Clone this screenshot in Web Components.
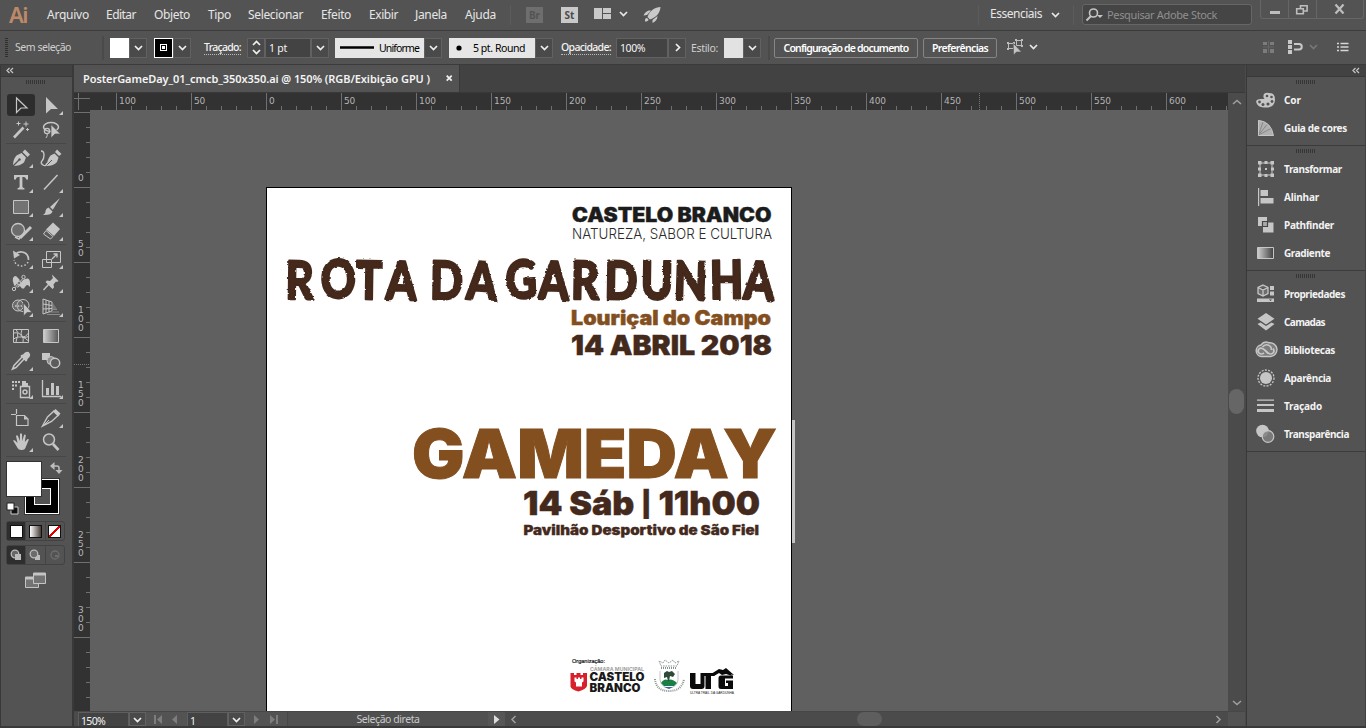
<!DOCTYPE html>
<html lang="pt">
<head>
<meta charset="utf-8">
<title>PosterGameDay_01_cmcb_350x350.ai</title>
<style>
html,body{margin:0;height:728px;overflow:hidden;background:#535353}
body{font-family:"Noto Sans","Open Sans",sans-serif}
</style>
</head>
<body>
<ai-app></ai-app>

<template id="t-app">
<style>
:host{display:grid;width:1366px;height:728px;grid-template:30px 35px 661px 2px / 1px 71px 2px 1171px 1px 1px 119px;background:#393939;color:#e4e4e4;overflow:hidden;box-sizing:border-box}
menu-bar{grid-area:1/1/2/8}
control-bar{grid-area:2/1/3/8}
tool-panel{grid-area:3/2}
doc-window{grid-area:3/4}
.gap{grid-area:3/5;background:#4a4a4a}
dock-panel{grid-area:3/7}
</style>
<menu-bar></menu-bar><control-bar></control-bar><tool-panel></tool-panel><doc-window></doc-window><div class="gap"></div><dock-panel></dock-panel>
</template>

<template id="t-menu">
<style>
:host{display:flex;align-items:center;background:#535353;height:30px;font-size:12px;line-height:16px;color:#e6e6e6}
:host>*{flex:none}
.logo{font:600 22px/28px "Noto Sans",sans-serif;color:#bd8a68;margin-left:9px;height:30px}
.v{width:1px;height:20px;background:#454545;border-right:1px solid #5c5c5c;box-sizing:border-box}
.app{width:17px;height:16px;font:bold 10px/16px "Noto Sans",sans-serif;text-align:center}
.br{background:#6e6e6e;color:#535353}
.st{background:#c9c9c9;color:#4b4b4b}
.search{box-sizing:border-box;display:flex;align-items:center;width:170px;height:21px;margin-top:-1px;border:1px solid #666;border-radius:3px;background:#454545;color:#8f8f8f}
.win{display:flex;align-self:flex-start;width:104px;height:19px;box-sizing:border-box;border:1px solid #666;border-top:0;border-radius:0 0 3px 3px}
.win svg{flex:none}
.win svg+svg{border-left:1px solid #666}
</style>
<fit-text w="18" class="logo">Ai</fit-text>
<fit-text w="42" style="margin-left:20px">Arquivo</fit-text>
<fit-text w="30" style="margin-left:17px">Editar</fit-text>
<fit-text w="36" style="margin-left:18px">Objeto</fit-text>
<fit-text w="23" style="margin-left:18px">Tipo</fit-text>
<fit-text w="55" style="margin-left:17px">Selecionar</fit-text>
<fit-text w="30" style="margin-left:18px">Efeito</fit-text>
<fit-text w="29" style="margin-left:18px">Exibir</fit-text>
<fit-text w="32" style="margin-left:17px">Janela</fit-text>
<fit-text w="31" style="margin-left:18px">Ajuda</fit-text>
<div class="v" style="margin-left:14px"></div>
<div class="app br" style="margin-left:15px">Br</div>
<div class="app st" style="margin-left:18px">St</div>
<svg style="margin-left:16px;margin-top:-2px" width="18" height="12" fill="#c9c9c9"><path d="M0 0h8v11H0zM9 0h8v5H9zM9 6h8v5H9z"/></svg>
<ui-chevron style="margin-left:5px;margin-top:-2px;width:12px"></ui-chevron>
<svg style="margin-left:13px;margin-top:-1px" width="20" height="18" fill="#c9c9c9"><path d="M18.500 1C13 1.500 8 4 5.500 11l2.500 2.500C15 11 18 6.500 18.500 1zM9 4.500C5 4 3 6.500 1.500 9.500L5 9zM15.500 10l-5 4 0 3c3-1.500 5-3.500 5-7zM5 12c-2 0-2 1.500-2 3.500 2 0 3.500-.500 3.500-2z"/></svg>
<div class="v" style="margin-left:316px"></div>
<fit-text w="52" style="margin-left:11px;margin-top:-2px">Essenciais</fit-text>
<ui-chevron style="margin-left:7px;width:12px"></ui-chevron>
<div class="v" style="margin-left:12px"></div>
<div class="search" style="margin-left:8px">
<svg width="22" height="16" fill="none" stroke="#c4c4c4" stroke-width="1.600"><circle cx="10.500" cy="6" r="4"/><path d="M8 9l-4.500 4.500" stroke-width="2"/><path d="M14 8h6l-3 3z" fill="#c4c4c4" stroke="none"/></svg>
<fit-text w="110" style="margin-left:2px;font-size:11px">Pesquisar Adobe Stock</fit-text></div>
<div class="win" style="margin-left:8px">
<svg width="27" height="18"><path d="M9 11h10v3H9z" fill="#bdbdbd"/></svg>
<svg width="27" height="18" fill="none" stroke="#bdbdbd" stroke-width="1.600"><path d="M11.500 9V5.700h6.600V11H14.500M7.700 8.700h6.600v5H7.700z"/></svg>
<svg width="46" height="18"><path d="M18.500 4.500l8 9M26.500 4.500l-8 9" stroke="#bdbdbd" stroke-width="2.200"/></svg>
</div>
</template>

<template id="t-control">
<style>
:host{display:flex;align-items:center;background:#535353;height:35px;box-sizing:border-box;border-top:1px solid #3b3b3b;border-bottom:1px solid #3b3b3b;font-size:10.500px;line-height:14px;color:#f4f4f4}
:host>*{flex:none}
.dim{color:#cfcfcf}
.lbl{border-bottom:1px dotted #bbb;line-height:13px;font-weight:500}
.sw{width:19px;height:20px;box-sizing:border-box}
.w{background:#fff}
.k{background:#000;border:1px solid #fff;display:grid;place-items:center}
.k i{width:5px;height:5px;border:1px solid #fff;display:grid;place-items:center}
.k i::after{content:"";width:3px;height:3px;background:#fff}
.k i{box-sizing:content-box}
.field{height:20px;background:#434343;border:1px solid #616161;box-sizing:border-box;display:flex;align-items:center;padding-left:3px}
.white{height:20px;background:#e6e6e6;color:#000;display:flex;align-items:center}
.btn{height:20px;box-sizing:border-box;border:1px solid #858585;border-radius:2px;display:flex;justify-content:center;align-items:center;font-weight:600;color:#fff}
.v{width:2px;height:24px;background:#4a4a4a}
ui-drop{width:18px}
</style>
<svg style="margin-left:5px" width="4" height="20"><path d="M1.500 0v20" stroke="#2f2f2f" stroke-width="3" stroke-dasharray="1 1"/></svg>
<fit-text class="dim" w="56" style="margin-left:6px;margin-top:-2px">Sem seleção</fit-text>
<div class="v" style="margin-left:31px"></div>
<div class="sw w" style="margin-left:6px"></div><ui-drop></ui-drop>
<div class="sw k" style="margin-left:7px"><i></i></div><ui-drop></ui-drop>
<fit-text class="lbl" w="37" style="margin-left:13px">Traçado:</fit-text>
<ui-drop style="margin-left:6px;width:18px" kind="step"></ui-drop>
<div class="field" style="width:46px"><fit-text w="18">1 pt</fit-text></div><ui-drop></ui-drop>
<div class="white" style="margin-left:6px;width:89px"><svg style="margin-left:5px" width="34" height="4"><path d="M0 1.500h34" stroke="#000" stroke-width="2.400"/></svg><fit-text w="40" style="margin-left:5px">Uniforme</fit-text></div><ui-drop></ui-drop>
<div class="white" style="margin-left:7px;width:86px"><svg style="margin-left:7px" width="6" height="6"><circle cx="3" cy="3" r="2.600"/></svg><fit-text w="52" style="margin-left:11px">5 pt. Round</fit-text></div><ui-drop></ui-drop>
<fit-text class="lbl" w="50" style="margin-left:8px">Opacidade:</fit-text>
<div class="field" style="margin-left:5px;width:52px"><fit-text w="25">100%</fit-text></div><ui-drop kind="right"></ui-drop>
<fit-text class="dim" w="27" style="margin-left:5px">Estilo:</fit-text>
<div class="sw" style="margin-left:6px;background:#e2e2e2"></div><ui-drop></ui-drop>
<div class="v" style="margin-left:7px"></div>
<div class="btn" style="margin-left:4px;width:144px"><fit-text w="125">Configuração de documento</fit-text></div>
<div class="btn" style="margin-left:5px;width:74px"><fit-text w="56">Preferências</fit-text></div>
<svg style="margin-left:9px;margin-top:-2px" width="18" height="18" fill="none" stroke="#bdbdbd"><path d="M2.500 5.500h5v5h-5zM10.500 2.500h5v5h-5z"/><path d="M1 4h2v2H1zM1 10h2v2H1zM7 4h2v2H7zM9 1h2v2H9zM15 1h2v2h-2zM15 7h2v2h-2z" fill="#bdbdbd" stroke="none"/><path d="M7.500 5.500v11.500l3-3h5z" fill="#c4c4c4" stroke="#535353" stroke-width=".6"/></svg>
<ui-chevron style="margin-left:4px;margin-top:-2px;width:10px"></ui-chevron>
<svg style="margin-left:225px;margin-top:-2px" width="12" height="14" fill="#7c7c7c"><path d="M0 2h4v3H0zM7 2h4v3H7zM0 9h4v4H0zM7 9h4v4H7z"/><path d="M5 1h1v12H5zM0 6.500h11v1H0z" fill="#666"/></svg>
<svg style="margin-left:13px;margin-top:-1px" width="15" height="14"><path d="M0 0h4v4H0zM0 5h4v4H0zM0 10h4v4H0z" fill="#c8c8c8"/><path d="M6 4h5a2.700 2.700 0 0 1 0 5.500H6" fill="none" stroke="#c8c8c8" stroke-width="2"/></svg>
<ui-chevron style="margin-left:5px;margin-top:-1px;width:10px;color:#777"></ui-chevron>
<svg style="margin-left:19px;margin-top:-1px" width="12" height="10"><path d="M0 1.500h2M3.500 1.500h8M0 5h2M3.500 5h8M0 8.500h2M3.500 8.500h8" stroke="#d6d6d6" stroke-width="1.400"/></svg>
</template>

<template id="t-tools">
<style>
:host{display:flex;flex-direction:column;background:#535353;height:661px}
.head{height:11px;background:#424242;border-bottom:1px solid #383838;flex:none}
.head svg{display:block;margin:2px 0 0 5px}
.g{display:grid;grid-template-columns:30px 30px;margin-left:5px;width:60px;border-bottom:1px solid #474747;box-sizing:border-box;flex:none}
ui-icon{width:30px;height:100%;align-items:center}
.sel{background:#2d2d2d;border-radius:3px;margin:2px 1px;width:28px;height:22px}
.fs{position:relative;height:58px;flex:none}
.stroke{position:absolute;left:24px;top:18px;width:34px;height:35px;box-sizing:border-box;border:1px solid #fff;outline:1px solid #333;background:#000;display:grid;place-items:center}
.stroke i{width:17px;height:17px;background:#535353;border:1px solid #fff;box-sizing:border-box}
.fill{position:absolute;left:5px;top:0;width:36px;height:36px;box-sizing:border-box;background:#fff;border:1px solid #333}
.swap{position:absolute;left:49px;top:1px}
.def{position:absolute;left:5px;top:41px}
.row{display:flex;margin-left:5px;width:59px;height:20px;box-sizing:border-box;border:1px solid #424242;border-radius:3px;flex:none}
.row>*{flex:1;display:grid;place-items:center}
.row>*+*{border-left:1px solid #454545}
.on{background:#2e2e2e}
.c{width:11px;height:11px;border:1px solid #111}
</style>
<div class="head"><svg width="8" height="7"><path d="M3.500 1L1 3.500 3.500 6M7 1L4.500 3.500 7 6" fill="none" stroke="#c4c4c4" stroke-width="1.300"/></svg></div>
<ui-grip style="margin:3px 0 0 25px"></ui-grip>
<div class="g" style="height:60px;padding-top:8px;grid-auto-rows:25px"><ui-icon class="sel" n="sel"></ui-icon><ui-icon n="direct" m></ui-icon><ui-icon n="wand"></ui-icon><ui-icon n="lasso"></ui-icon></div>
<div class="g" style="height:101px;padding-top:2px;grid-auto-rows:24.330px"><ui-icon n="pen" m></ui-icon><ui-icon n="curv"></ui-icon><ui-icon n="type" m></ui-icon><ui-icon n="line" m></ui-icon><ui-icon n="rect" m></ui-icon><ui-icon n="brush" m></ui-icon><ui-icon n="shaper" m></ui-icon><ui-icon n="eraser" m></ui-icon></div>
<div class="g" style="height:77px;padding-top:2px;grid-auto-rows:24px"><ui-icon n="rotate" m></ui-icon><ui-icon n="scale" m></ui-icon><ui-icon n="width" m></ui-icon><ui-icon n="pin" m></ui-icon><ui-icon n="shapeb" m></ui-icon><ui-icon n="persp" m></ui-icon></div>
<div class="g" style="height:53px;padding-top:2px;grid-auto-rows:24.500px"><ui-icon n="mesh"></ui-icon><ui-icon n="grad"></ui-icon><ui-icon n="eye" m></ui-icon><ui-icon n="blend"></ui-icon></div>
<div class="g" style="height:29px;padding-top:2px;grid-auto-rows:24px"><ui-icon n="spray" m></ui-icon><ui-icon n="graph" m></ui-icon></div>
<div class="g" style="height:53px;padding-top:2px;grid-auto-rows:24px"><ui-icon n="artb"></ui-icon><ui-icon n="slice" m></ui-icon><ui-icon n="hand" m></ui-icon><ui-icon n="zoom"></ui-icon></div>
<div class="fs" style="margin-top:4px"><div class="stroke"><i></i></div><div class="fill"></div>
<svg class="swap" width="13" height="13" fill="#bdbdbd"><path d="M2 4h5q2 0 2 2v4" fill="none" stroke="#bdbdbd" stroke-width="1.500"/><path d="M4.500 0v8L0 4zM5.500 8h7L9 12z"/></svg>
<svg class="def" width="13" height="13"><path d="M5 5h7v7H5z" fill="#111" stroke="#ccc"/><path d="M1 1h7v7H1z" fill="#fff" stroke="#222"/></svg></div>
<div class="row" style="margin-top:2px"><div class="on"><div class="c" style="background:#fff"></div></div><div><div class="c" style="background:linear-gradient(90deg,#fff,#463c38)"></div></div><div><div class="c" style="background:linear-gradient(135deg,#fff 41%,#e00000 42% 58%,#fff 59%)"></div></div></div>
<div class="row" style="margin-top:4px"><div class="on"><svg width="12" height="12"><circle cx="5" cy="5" r="3.800" fill="#666" stroke="#bbb" stroke-width="1.300"/><path d="M5 5h6v6H5z" fill="#bbb"/></svg></div><div><svg width="12" height="12"><path d="M6 6h5v5H6z" fill="#bbb"/><circle cx="5" cy="5" r="3.800" fill="#6b6b6b" stroke="#bbb" stroke-width="1.300"/></svg></div><div><svg width="12" height="12"><circle cx="6" cy="6" r="4" fill="none" stroke="#6e6e6e" stroke-width="1.300"/><path d="M6 6h3v2H6z" fill="#6e6e6e"/></svg></div></div>
<svg style="margin:7px 0 0 23px;flex:none" width="24" height="17" fill="#737373" stroke="#c4c4c4"><path d="M1.500 5.500h13v10h-13z"/><path d="M1.500 5h13v2h-13z" fill="#c4c4c4"/><path d="M9.500 1.500h12v10h-12z"/><path d="M9.500 1h12v2h-12z" fill="#c4c4c4"/></svg>
</template>

<template id="t-doc">
<style>
:host{display:grid;width:1171px;height:661px;grid-template:28px 17px 601px 15px / 16px 1138px 17px;background:#4b4b4b}
.tabs{grid-area:1/1/2/4;background:#424242;border-bottom:1px solid #393939;display:flex;box-sizing:border-box}
.tab{box-sizing:border-box;width:386px;background:#535353;border-right:1px solid #393939;display:flex;align-items:center;font-size:11px;font-weight:600;color:#f4f4f4;padding-left:9px}
.corner{grid-area:2/1;background:linear-gradient(#707070,#707070) 0 5px/16px 1px no-repeat,linear-gradient(#707070,#707070) 4px 0/1px 18px no-repeat,#323232}
.bar{background:#4b4b4b}
.vs{grid-area:2/3/4/4;display:flex;flex-direction:column;align-items:center;width:17px}
.hs{grid-area:4/1/5/4;display:flex;align-items:stretch;font-size:10.500px;line-height:17px;border-top:1px solid #474747;box-sizing:border-box;height:15px}
.hs>*{flex:none}
.f{background:#434343;border:1px solid #5e5e5e;border-bottom:0;box-sizing:border-box;padding-left:2px;color:#f2f2f2}
.p{background:#535353;display:flex;align-items:center}
ui-drop{height:14px;width:18px}
</style>
<div class="tabs"><div class="tab"><fit-text w="347">PosterGameDay_01_cmcb_350x350.ai @ 150% (RGB/Exibição GPU )</fit-text><svg style="margin-left:16px" width="7" height="7"><path d="M.7.7l5 5M5.700.7l-5 5" stroke="#eee" stroke-width="1.800"/></svg></div></div>
<div class="corner"></div>
<ui-ruler style="grid-area:2/2" dir="h"></ui-ruler>
<ui-ruler style="grid-area:3/1" dir="v"></ui-ruler>
<poster-canvas style="grid-area:3/2"></poster-canvas>
<div class="vs bar"><svg style="margin-top:6px" width="10" height="6"><path d="M1 5l4-3.500L9 5" fill="none" stroke="#a0a0a0" stroke-width="1.500"/></svg><div style="margin-top:284px;width:15px;height:25px;border-radius:8px;background:#666"></div><svg style="margin-top:286px" width="10" height="6"><path d="M1 1l4 3.500L9 1" fill="none" stroke="#a0a0a0" stroke-width="1.500"/></svg></div>
<div class="hs bar"><div class="f" style="margin-left:4px;width:51px"><fit-text w="24">150%</fit-text></div><ui-drop style="width:17px"></ui-drop>
<div class="p" style="width:41px"><svg width="41" height="14" fill="#7d7d7d"><path d="M8 3h2v9H8zM16 3v9l-5-4.500zM31 3v9l-5-4.500z"/></svg></div>
<div class="f" style="width:41px"><fit-text w="6">1</fit-text></div><ui-drop style="width:17px"></ui-drop>
<div class="p" style="width:42px;border-right:1px solid #474747"><svg width="41" height="14" fill="#7d7d7d"><path d="M9 3v9l5-4.500zM25 3v9l5-4.500zM31 3h2v9h-2z"/></svg></div>
<div class="p" style="width:200px;justify-content:center;color:#c9c9c9;background:#505050"><fit-text w="63">Seleção direta</fit-text></div>
<div class="p" style="width:17px;background:#565656"><svg width="17" height="14"><path d="M6 3v9l5.500-4.500z" fill="#dcdcdc"/></svg></div>
<svg style="margin-left:4px" width="10" height="14"><path d="M6.500 4L3 7.500 6.500 11" fill="none" stroke="#a0a0a0" stroke-width="1.500"/></svg>
<div style="margin-left:338px;width:25px;height:14px;border-radius:8px;background:#5e5e5e"></div>
<svg style="margin-left:332px" width="10" height="14"><path d="M2.500 4L6 7.500 2.500 11" fill="none" stroke="#a0a0a0" stroke-width="1.500"/></svg>
<div style="margin-left:4px;width:17px;background:#535353"></div></div>
</template>

<template id="t-canvas">
<style>
:host{display:flex;justify-content:flex-start;background:#606060;overflow:hidden;height:601px}
.art{margin:77px 0 0 176px;width:524px;height:523px;background:#fff;border:1px solid #000;border-bottom:0;flex:none}
svg{display:block}
.mark{margin-top:310px;width:3px;height:123px;background:#c4c4c4;flex:none}
.b{font-family:Inter,sans-serif;font-weight:900}
</style>
<div class="art">
<svg width="524" height="523" viewBox="267 188 524 523" fill="#44291d">
<defs><filter id="rough" x="-2%" y="-10%" width="104%" height="120%"><feTurbulence type="fractalNoise" baseFrequency=".12 .25" numOctaves="2" seed="4" result="n"/><feDisplacementMap in="SourceGraphic" in2="n" scale="2.600" xChannelSelector="R" yChannelSelector="G"/></filter></defs>
<g class="b">
<text x="572" y="221.500" font-size="19.500" fill="#1c1c1c" stroke="#1c1c1c" stroke-width=".4" textLength="199.500" lengthAdjust="spacingAndGlyphs">CASTELO BRANCO</text>
<text x="572" y="239" font-size="14.500" fill="#2a2a2a" style="font-weight:350" textLength="200" lengthAdjust="spacingAndGlyphs">NATUREZA, SABOR E CULTURA</text>
<text x="571" y="324.500" font-size="20" fill="#834f1f" stroke="#834f1f" stroke-width=".4" textLength="200" lengthAdjust="spacingAndGlyphs">Louriçal do Campo</text>
<text x="571" y="354.500" font-size="27" stroke="#44291d" stroke-width=".4" textLength="201" lengthAdjust="spacingAndGlyphs">14 ABRIL 2018</text>
<text x="412" y="477.500" font-size="68" fill="#834f1f" stroke="#834f1f" stroke-width="1" textLength="365" lengthAdjust="spacingAndGlyphs">GAMEDAY</text>
<text x="523" y="515" font-size="33" stroke="#44291d" stroke-width=".4" textLength="237" lengthAdjust="spacingAndGlyphs">14 Sáb <tspan font-size="25" dy="-2.500">|</tspan><tspan dy="2.500"> 11h00</tspan></text>
<text x="523.500" y="535" font-size="13" stroke="#44291d" stroke-width=".3" textLength="235.500" lengthAdjust="spacingAndGlyphs">Pavilhão Desportivo de São Fiel</text>
</g>
<g filter="url(#rough)"><text transform="scale(.82 1)" y="299" font-family="Lato,sans-serif" font-weight="900" font-size="53" stroke="#44291d" stroke-width="2.200" stroke-linejoin="round" x="348 392 434 470 512 524 568 604 617 656 696 737 781 821 866 906" rotate="1 -3 1 2 0 1 3 0 -2 2 1 1 1 2 -1 2">ROTA DA GARDUNHA</text></g>
<text x="572" y="663" font-family="Liberation Sans,sans-serif" font-size="6" fill="#111" stroke="#111" stroke-width=".2" textLength="33" lengthAdjust="spacingAndGlyphs">Organização:</text>
<path d="M570.500 673h3.500v2h2.500v-2h4v2h2.500v-2h4v13q-1 3-8.500 5.500-7.500-2-8-5z" fill="#d8202c"/><path d="M574.500 677.500h2v1.500h1.500v-1.500h2v1.500h1.500v-1.500h2v4l-1.500 1v4h-6v-4l-1.500-1z" fill="#fff"/>
<text class="b" x="590" y="671" font-size="5.200" style="font-weight:700" fill="#a3a3a3" textLength="54" lengthAdjust="spacingAndGlyphs">CÂMARA MUNICIPAL</text>
<g class="b" fill="#1a1a1a"><text x="589.500" y="681.300" font-size="11.600" textLength="55" lengthAdjust="spacingAndGlyphs">CASTELO</text><text x="589.500" y="692" font-size="11.600" textLength="51" lengthAdjust="spacingAndGlyphs">BRANCO</text></g>
<g fill="none" stroke="#8c938c" stroke-width="1"><path d="M659 661l2 5h16l2-5-4 2-2-3-4 3-4-3-2 3z" stroke-dasharray="1.500 1"/><path d="M661 668h16M655 679q1 12 14 12t15-12" stroke-dasharray="1 1" stroke-width="2"/><path d="M660 671v9q1 7 9 8 8-1 9-8v-9" stroke="#c5c5c5"/></g>
<path d="M661 683q3-5 7-3 4-2 9 3l-3 3h-10z" fill="#198045"/><path d="M664 673l3-2 2 1 3-1 3 3-2 3-3-1-1 5h-1l-1-4-3 1z" fill="#2f4a38"/><path d="M664 687h9l-4 2z" fill="#3465a0"/>
<g fill="#0a0a0a"><path d="M690 673h5.500v11h5v-11h15l-1.500 3h-3v13h-5.500v-13h-1v10q0 3-3 3h-8.500q-3 0-3-3z"/><path d="M711 674l8-5 4 1 3-2 8 7-3-.5 1 1.500-6-2-4 1-3-2-5 3z"/><path d="M721 675.500h12v3h-8v7.500h3v-3h-2v-2.500h7v8.500h-12q-2.500 0-2.500-2.500V678q0-2.500 2.500-2.500z"/></g>
<text x="690" y="693.500" font-family="Liberation Sans,sans-serif" font-size="2.800" fill="#222" textLength="44" lengthAdjust="spacingAndGlyphs">ULTRA TRAIL DA GARDUNHA</text>
</svg></div><div class="mark"></div>
</template>

<template id="t-dock">
<style>
:host{display:flex;flex-direction:column;background:#535353;height:661px;border-right:1px solid #424242;box-sizing:border-box}
.head{height:11px;background:#424242;border-bottom:1px solid #383838;flex:none}
.head svg{display:block;margin:2px 0 0 105px}
</style>
<div class="head"><svg width="8" height="7"><path d="M3.500 1L1 3.500 3.500 6M7 1L4.500 3.500 7 6" fill="none" stroke="#c4c4c4" stroke-width="1.300"/></svg></div>
<dock-group><dock-item n="cor" w="17">Cor</dock-item><dock-item n="guia" w="63">Guia de cores</dock-item></dock-group>
<dock-group><dock-item n="transf" w="58">Transformar</dock-item><dock-item n="align" w="35">Alinhar</dock-item><dock-item n="pathf" w="50">Pathfinder</dock-item><dock-item n="gradp" w="46">Gradiente</dock-item></dock-group>
<dock-group><dock-item n="props" w="61">Propriedades</dock-item><dock-item n="layers" w="41">Camadas</dock-item><dock-item n="cc" w="51">Bibliotecas</dock-item><dock-item n="appear" w="47">Aparência</dock-item><dock-item n="lines" w="38">Traçado</dock-item><dock-item n="transp" w="65">Transparência</dock-item></dock-group>
</template>

<script>
const fromTemplate = id => class extends HTMLElement {
  constructor(){ super(); this.attachShadow({mode:'open'}).append(document.getElementById(id).content.cloneNode(true)); }
};
const C='#c6c6c6';
const ICONS={
sel:`<path d="M7.500 5v14.500l4.500-4.500h6z" fill="none" stroke="${C}" stroke-width="1.200"/>`,
direct:`<path d="M7 4v16.500l5-4.500h7z"/>`,
wand:`<path d="M5 19.500L14.500 9.500" stroke="${C}" stroke-width="2.600"/><path d="M17 3.500v5M14.500 6h5M9.500 3.500v4M7.500 5.500h4M18.500 10v3M17 11.500h3" stroke="${C}"/>`,
lasso:`<ellipse cx="12" cy="9" rx="7.500" ry="4.500" fill="none" stroke="${C}" stroke-width="1.500"/><circle cx="8" cy="13" r="2.600" fill="none" stroke="${C}" stroke-width="1.300"/><path d="M8 15q1 3-1 5" fill="none" stroke="${C}"/><path d="M12 6.500V20l4-4h5.500z" stroke="#535353" stroke-width=".7"/>`,
pen:`<path d="M4 20q0-7 3.500-10.500l5-2.500 4.500 4.500-2 5Q11 20 4 20z"/><path d="M13.500 6l2.500-2.500 5 5-2.500 2.500z"/><path d="M4 20l6-6" stroke="#535353" stroke-width="1.200"/><circle cx="10.500" cy="13.500" r="1.200" fill="#535353"/>`,
curv:`<path d="M7.500 20q1-7 4-10.500l4-2 4 4-1.500 4.500Q14.500 20 7.500 20z"/><path d="M16 6l2-2.500 4.500 4.500-2.500 2z"/><path d="M7 20l6-6" stroke="#535353"/><path d="M2 5q3 0 3 4t-2 6 1 4 4-2" fill="none" stroke="${C}" stroke-width="1.400"/>`,
type:`<path d="M5 5h14v4.500h-1.800q-.2-2.500-2.200-2.500H13.400v9.500q0 1.500 2 1.500v1.500H8.600V18q2 0 2-1.500V7H9Q7 7 6.800 9.500H5z"/>`,
line:`<path d="M5 19.500L18.500 5" stroke="${C}" stroke-width="1.500"/>`,
rect:`<path d="M4.500 5.500h15v13h-15z" fill="#737373" stroke="${C}"/>`,
brush:`<path d="M21 3l-10 9 2.800 2.800z"/><path d="M9.500 12.500l4 4q-1 4-10 3.500 3-1 3-4 .5-3 3-3.500z"/>`,
shaper:`<circle cx="9" cy="11" r="6.500" fill="#6c6c6c" stroke="${C}" stroke-width="1.300"/><path d="M11 19L22 8" stroke="${C}" stroke-width="3"/><path d="M6 18l4 2 2-3" fill="none" stroke="${C}" stroke-width="1.500"/>`,
eraser:`<path d="M14 3.500l7 6.500-6 7-8-6.500z"/><path d="M7 11.500l7 6-2.500 2.500-7-5z" fill="#5a5a5a" stroke="${C}"/>`,
rotate:`<path d="M6 7.500Q9 4.500 13 5q6.500 1 6.500 8" fill="none" stroke="${C}" stroke-width="1.700"/><path d="M4 3.500l1 8 6-3.500z"/><path d="M19 15a7.500 7.500 0 0 1-14-2" fill="none" stroke="${C}" stroke-width="1.500" stroke-dasharray="1.500 2"/>`,
scale:`<path d="M7.500 4.500h14v11h-14z" fill="none" stroke="${C}"/><path d="M3.500 12.500h9v8h-9z" fill="none" stroke="${C}"/><path d="M13 12l4.500-4.500M14.500 7h3.500v3.500" fill="none" stroke="${C}" stroke-width="1.300"/>`,
width:`<path d="M4 7q2-4 5 0t4 2l3-1q5-2 5 4v4q-3-4-5 0t-5-1q-4 4-6-1-2-4-1-7z"/><path d="M5 18L15 6" stroke="#535353" stroke-width="2.200"/><path d="M5 18L15 6" stroke="${C}"/><circle cx="5" cy="18" r="1.700" fill="#535353" stroke="${C}"/><circle cx="14.500" cy="6" r="1.700" fill="#535353" stroke="${C}"/><circle cx="10" cy="12" r="1.500" fill="#535353" stroke="${C}"/>`,
pin:`<path d="M13 3.500l6.500 6.500-1.500 1-1-.5-2.500 3 .5 3-1.500 1.500-7-7 1.500-1.500 3 .5 3-3-.5-1z"/><path d="M10 13l-5.500 6" stroke="${C}" stroke-width="1.400"/>`,
shapeb:`<ellipse cx="9" cy="10.500" rx="5.500" ry="5.500" fill="#6a6a6a" stroke="${C}"/><circle cx="14" cy="10.500" r="6" fill="none" stroke="${C}"/><path d="M6 11h11" stroke="${C}" stroke-width="1.500" stroke-dasharray="1.500 1.300"/><path d="M14.500 8v13l3.500-3.500h5z" stroke="#535353" stroke-width=".7"/>`,
persp:`<path d="M4 4l9 3v9l-9 3zM4 9l9 1.500M4 14l9-.5M7 5v13M10 6v11" fill="none" stroke="${C}"/><path d="M12 14.500h6M11 17h9M8 19.500h13" stroke="#8a8a8a"/><path d="M14 8l4 6h-4z" fill="#777"/>`,
mesh:`<path d="M4.500 5.500h15v13h-15zM4.500 9q6-1 7.500 2.500t7.500 1M7 5.500q3 3 1.500 7T7 18.500M13 5.500q-2 4 0 6.500t1 6.500M4.500 15q4-3 8-2t7-4M19.500 17q-3-3-6-4" fill="none" stroke="${C}"/>`,
grad:`<defs><linearGradient id="g"><stop stop-color="#d0d0d0"/><stop offset="1" stop-color="#555"/></linearGradient></defs><path d="M4.500 5.500h15v13h-15z" fill="url(#g)" stroke="${C}"/>`,
eye:`<path d="M14.500 8.500l1 1-8.500 9-3.500 1.500L5 16.500l8.500-9z" fill="none" stroke="${C}" stroke-width="1.500"/><path d="M12 6l2-.5 2-2q3-1.500 4.500.5t0 4l-2 2-.5 2-1.200.5-5.300-5.300z"/>`,
blend:`<path d="M3 4h8v7H3z"/><circle cx="12" cy="11.500" r="4" fill="#8e8e8e" stroke="${C}"/><circle cx="16" cy="14" r="4.700" fill="#5c5c5c" stroke="${C}" stroke-width="1.500"/>`,
spray:`<path d="M3 4h2v2H3zM6 4h2v2H6zM9 4h2v2H9zM3 7.500h2v2H3zM6 7.500h2v2H6zM3 11h2v2H3z"/><path d="M11.500 9.500h9v11h-9z" fill="none" stroke="${C}" stroke-width="1.400"/><path d="M13 4h4v2h2v3h-6z"/><circle cx="16" cy="15" r="2" fill="none" stroke="${C}" stroke-width="1.500"/>`,
graph:`<path d="M3.500 3v16.500H22" fill="none" stroke="${C}" stroke-width="1.300"/><path d="M7 11h3v7H7zM12 6h3v12h-3zM17 9h3v9h-3z"/>`,
artb:`<path d="M7.500 3v5M2 8.500h5M7.500 9.500h8l3.500 3.500v6.500h-11.500z" fill="none" stroke="${C}" stroke-width="1.200"/><path d="M15 9.500v4h4z"/>`,
slice:`<path d="M15 5l4.500 4-7 6.500-9 4.500 5-9z" fill="none" stroke="${C}" stroke-width="1.400"/><path d="M14 5.500l2.500-2.500 5 4.500-2.500 3z"/><path d="M4 20l6-6" stroke="${C}"/>`,
hand:`<path d="M4 10.500q1.500-1 3 1l1.500 1.500L7 6q1-1.500 2 0l1.800 5L11 4q1-1.500 2 0l.3 7L15 5q1.200-1 1.800.3L15.800 12 18.500 9q1.500-.5 1.200 1L17 16.500q-1 3.500-4 3.500-3.500.5-5-3z"/>`,
zoom:`<circle cx="10" cy="9.500" r="5.500" fill="#606060" stroke="${C}" stroke-width="1.500"/><path d="M14 14l5.500 6" stroke="${C}" stroke-width="2.600"/>`,
cor:`<path d="M7 11Q1 11 2.500 15t7 4.500h5Q21 18 21 11.500T15 5q-5-1-5.500 2.500T12 11 7 11z"/><g fill="#535353"><circle cx="13" cy="8" r="1.300"/><circle cx="17.500" cy="9" r="1.300"/><circle cx="18" cy="13.500" r="1.400"/><circle cx="14" cy="16" r="1.600"/><circle cx="9" cy="16.500" r="1.500"/><circle cx="5.500" cy="14" r="1.400"/></g>`,
guia:`<path d="M4 4q13 1 15.500 15.500H4z" fill="#b0b0b0"/><path d="M4.500 19L9 6M4.500 19L13 8.500M4.500 19L17 12.500" stroke="#888"/><path d="M4.500 4.500q12.500 1 15 15h-15z" fill="none" stroke="${C}"/>`,
transf:`<path d="M6 6h12v12H6z" fill="none" stroke="${C}"/><path d="M4 4h3.500v3.500H4zM10.500 4h3v3h-3zM16.500 4H20v3.500h-3.500zM4 10.500h3v3H4zM17 10.500h3v3h-3zM4 16.500h3.500V20H4zM10.500 17h3v3h-3zM16.500 16.500H20V20h-3.500zM11 11h2v2h-2z"/>`,
align:`<path d="M4 3h1.200v18H4zM6.500 5H14v6H6.500zM6.500 13H19.500v5.500H6.500z"/>`,
pathf:`<path d="M4 4h9v9H4z"/><path d="M9 9.500h10.500V19.500H9z"/><path d="M8.500 8.500h5v5h-5z" fill="#a8a8a8" stroke="#454545" stroke-width="1.200"/>`,
gradp:`<defs><linearGradient id="g"><stop stop-color="#d0d0d0"/><stop offset="1" stop-color="#404040"/></linearGradient></defs><path d="M3.500 6.500h16v11h-16z" fill="url(#g)" stroke="${C}"/>`,
props:`<path d="M9 3l5 2.500v6L9 14l-5-2.500v-6zM4 5.500L9 8l5-2.500M9 8v6" fill="#6d6d6d" stroke="${C}" stroke-width="1.300"/><path d="M16 4h4v4h-4zM16 9.500h4v4h-4zM3 16.500h17V20H3z"/><path d="M15 17.500h3l-1.500 1.500z" fill="#444"/>`,
layers:`<path d="M12 3l8.500 5.700-8.500 5.800L3.500 8.700z"/><path d="M3.500 14l3-1.500L12 16l5.500-3.500 3 1.500-8.500 6.500z"/>`,
cc:`<path d="M7.500 18.500a5.800 5.800 0 0 1-.5-11.500 6.500 6.500 0 0 1 8-2.200A6.900 6.900 0 0 1 17 18.500z" fill="#7c7c7c" stroke="${C}" stroke-width="1.400"/><path d="M14 15.500l-4-4Q7 9 5 11t0 4q2 2 5 0" fill="none" stroke="${C}" stroke-width="1.700"/><path d="M8.500 9Q11 6 14 7q3.500 1 3.500 5M11 12l3 3q3 2 5 0t0-4.500" fill="none" stroke="${C}" stroke-width="1.700"/>`,
appear:`<circle cx="12" cy="12" r="6"/><circle cx="12" cy="12" r="8" fill="none" stroke="${C}" stroke-width="1.300" stroke-dasharray="2 1.300"/>`,
lines:`<path d="M3 5.500h17v1.200H3zM3 10h17v2H3zM3 15h17v3H3z"/>`,
transp:`<circle cx="8.500" cy="9" r="6.300"/><circle cx="14" cy="14.500" r="5.800" fill="#808080" fill-opacity=".85" stroke="${C}" stroke-width="1.200"/>`
};
customElements.define('ai-app', fromTemplate('t-app'));
customElements.define('menu-bar', fromTemplate('t-menu'));
customElements.define('control-bar', fromTemplate('t-control'));
customElements.define('tool-panel', fromTemplate('t-tools'));
customElements.define('doc-window', fromTemplate('t-doc'));
customElements.define('poster-canvas', fromTemplate('t-canvas'));
customElements.define('dock-panel', fromTemplate('t-dock'));

customElements.define('ui-icon', class extends HTMLElement{
  connectedCallback(){
    if(this.shadowRoot) return;
    this.attachShadow({mode:'open'}).innerHTML=`<style>:host{display:flex;justify-content:center;position:relative}svg{display:block;flex:none;overflow:visible}.m{position:absolute;right:3px;bottom:2px}</style><svg width="24" height="24" viewBox="0 0 24 24" fill="${C}">${ICONS[this.getAttribute('n')]}</svg>${this.hasAttribute('m')?`<svg class="m" width="4" height="4"><path d="M4 0v4H0z" fill="${C}"/></svg>`:''}`;
  }
});
customElements.define('ui-grip', class extends HTMLElement{
  constructor(){ super(); this.attachShadow({mode:'open'}).innerHTML=`<style>:host{display:block;width:20px;height:4px;flex:none;background:repeating-linear-gradient(90deg,#363636 0 1px,transparent 1px 2px)}</style>`; }
});
customElements.define('ui-chevron', class extends HTMLElement{
  constructor(){ super(); this.attachShadow({mode:'open'}).innerHTML=`<style>:host{display:flex;justify-content:center;color:#e8e8e8}</style><svg width="9" height="6"><path d="M1 1l3.500 3.500L8 1" fill="none" stroke="currentColor" stroke-width="1.700"/></svg>`; }
});
customElements.define('ui-drop', class extends HTMLElement{
  connectedCallback(){
    const k=this.getAttribute('kind');
    const d=k==='step'?'M1 6l3.500-3.500L8 6M1 11l3.500 3.500L8 11':k==='right'?'M3 5l3.500 3.500L3 12':'M1 7l3.500 3.500L8 7';
    this.attachShadow({mode:'open'}).innerHTML=`<style>:host{display:flex;justify-content:center;align-items:center;height:20px;box-sizing:border-box;border:1px solid #616161;background:#4a4a4a;flex:none}</style><svg width="9" height="17"><path d="${d}" fill="none" stroke="#f0f0f0" stroke-width="1.700"/></svg>`;
  }
});
customElements.define('ui-ruler', class extends HTMLElement{
  connectedCallback(){
    const h=this.getAttribute('dir')==='h', r=this.attachShadow({mode:'open'});
    const labels=h?['','100','50','0','50','100','150','200','250','300','350','400','450','500','550','600']:['','0','50','100','150','200','250','300',''];
    r.innerHTML=h?`<style>:host{display:flex;background:#323232;overflow:hidden;height:17px;font:9px/11px "DejaVu Sans",sans-serif;color:#b4b4b4}
div{flex:none;width:75px;height:17px;margin:0;padding:3px 0 0 3px;box-sizing:border-box;background:repeating-linear-gradient(90deg,#707070 0 1px,transparent 1px 15px) 0 100%/75px 4px no-repeat,linear-gradient(#707070,#707070) 0 0/1px 100% no-repeat}
div:first-of-type{margin-left:-49px}
div.cur{background-image:repeating-linear-gradient(#777 0 1px,transparent 1px 2px),repeating-linear-gradient(90deg,#707070 0 1px,transparent 1px 15px),linear-gradient(#707070,#707070);background-size:1px 17px,75px 4px,1px 100%;background-position:38px 0,0 100%,0 0;background-repeat:no-repeat}</style>`
    :`<style>:host{display:flex;flex-direction:column;background:#323232;overflow:hidden;height:601px;font:9px/9px "DejaVu Sans",sans-serif;color:#b4b4b4}
div{flex:none;width:16px;height:75px;padding:0 0 5px 4px;box-sizing:border-box;display:flex;flex-direction:column;justify-content:flex-end;background:repeating-linear-gradient(0deg,#707070 0 1px,transparent 1px 15px) 100% 0/4px 75px no-repeat,linear-gradient(#707070,#707070) 0 100%/100% 1px no-repeat}
div:first-of-type{margin-top:-72px}
div.cur{background:repeating-linear-gradient(90deg,#777 0 1px,transparent 1px 2px) 0 26px/16px 1px no-repeat,repeating-linear-gradient(0deg,#707070 0 1px,transparent 1px 15px) 100% 0/4px 75px no-repeat,linear-gradient(#707070,#707070) 0 100%/100% 1px no-repeat}
span{display:block;height:9px}</style>`;
    labels.forEach((t,i)=>{
      const d=document.createElement('div');
      if(h){ if(t){const f=document.createElement('fit-text'); f.setAttribute('w',t.length===3?'17':t.length===2?'11':'6'); f.textContent=t; d.append(f);} if(i===12) d.className='cur'; }
      else { for(const c of t){const s=document.createElement('span'); s.textContent=c; d.append(s);} if(i===4) d.className='cur'; }
      r.append(d);
    });
  }
});
customElements.define('dock-group', class extends HTMLElement{
  constructor(){ super(); this.attachShadow({mode:'open'}).innerHTML=`<style>:host{display:block;flex:none;padding-bottom:3px;border-bottom:1px solid #3b3b3b}ui-grip{margin:3px 0 2px 49px}</style><ui-grip></ui-grip><slot></slot>`; }
});
customElements.define('dock-item', class extends HTMLElement{
  connectedCallback(){
    const n=this.getAttribute('n'), t=this.textContent;
    this.attachShadow({mode:'open'}).innerHTML=`<style>:host{display:flex;height:28px;align-items:center;font-size:10px;font-weight:700;color:#f2f2f2;line-height:14px}ui-icon{margin-left:7px;width:24px}fit-text{margin-left:6px}</style><ui-icon n="${n}"></ui-icon><fit-text w="${this.getAttribute('w')}">${t}</fit-text>`;
  }
});
/* Text set to an exact advance width by adjusting its tracking. */
customElements.define('fit-text', class extends HTMLElement{
  connectedCallback(){
    const w=+this.getAttribute('w');
    if(!this.shadowRoot) this.attachShadow({mode:'open'}).innerHTML=`<style>:host{display:block;flex:none;white-space:pre}span{display:inline-block}</style><span><slot></slot></span>`;
    this.style.width=w+'px';
    const s=this.shadowRoot.querySelector('span'), n=this.textContent.length;
    s.style.letterSpacing=((w-s.getBoundingClientRect().width)/n).toFixed(3)+'px';
  }
});
</script>
</body>
</html>
